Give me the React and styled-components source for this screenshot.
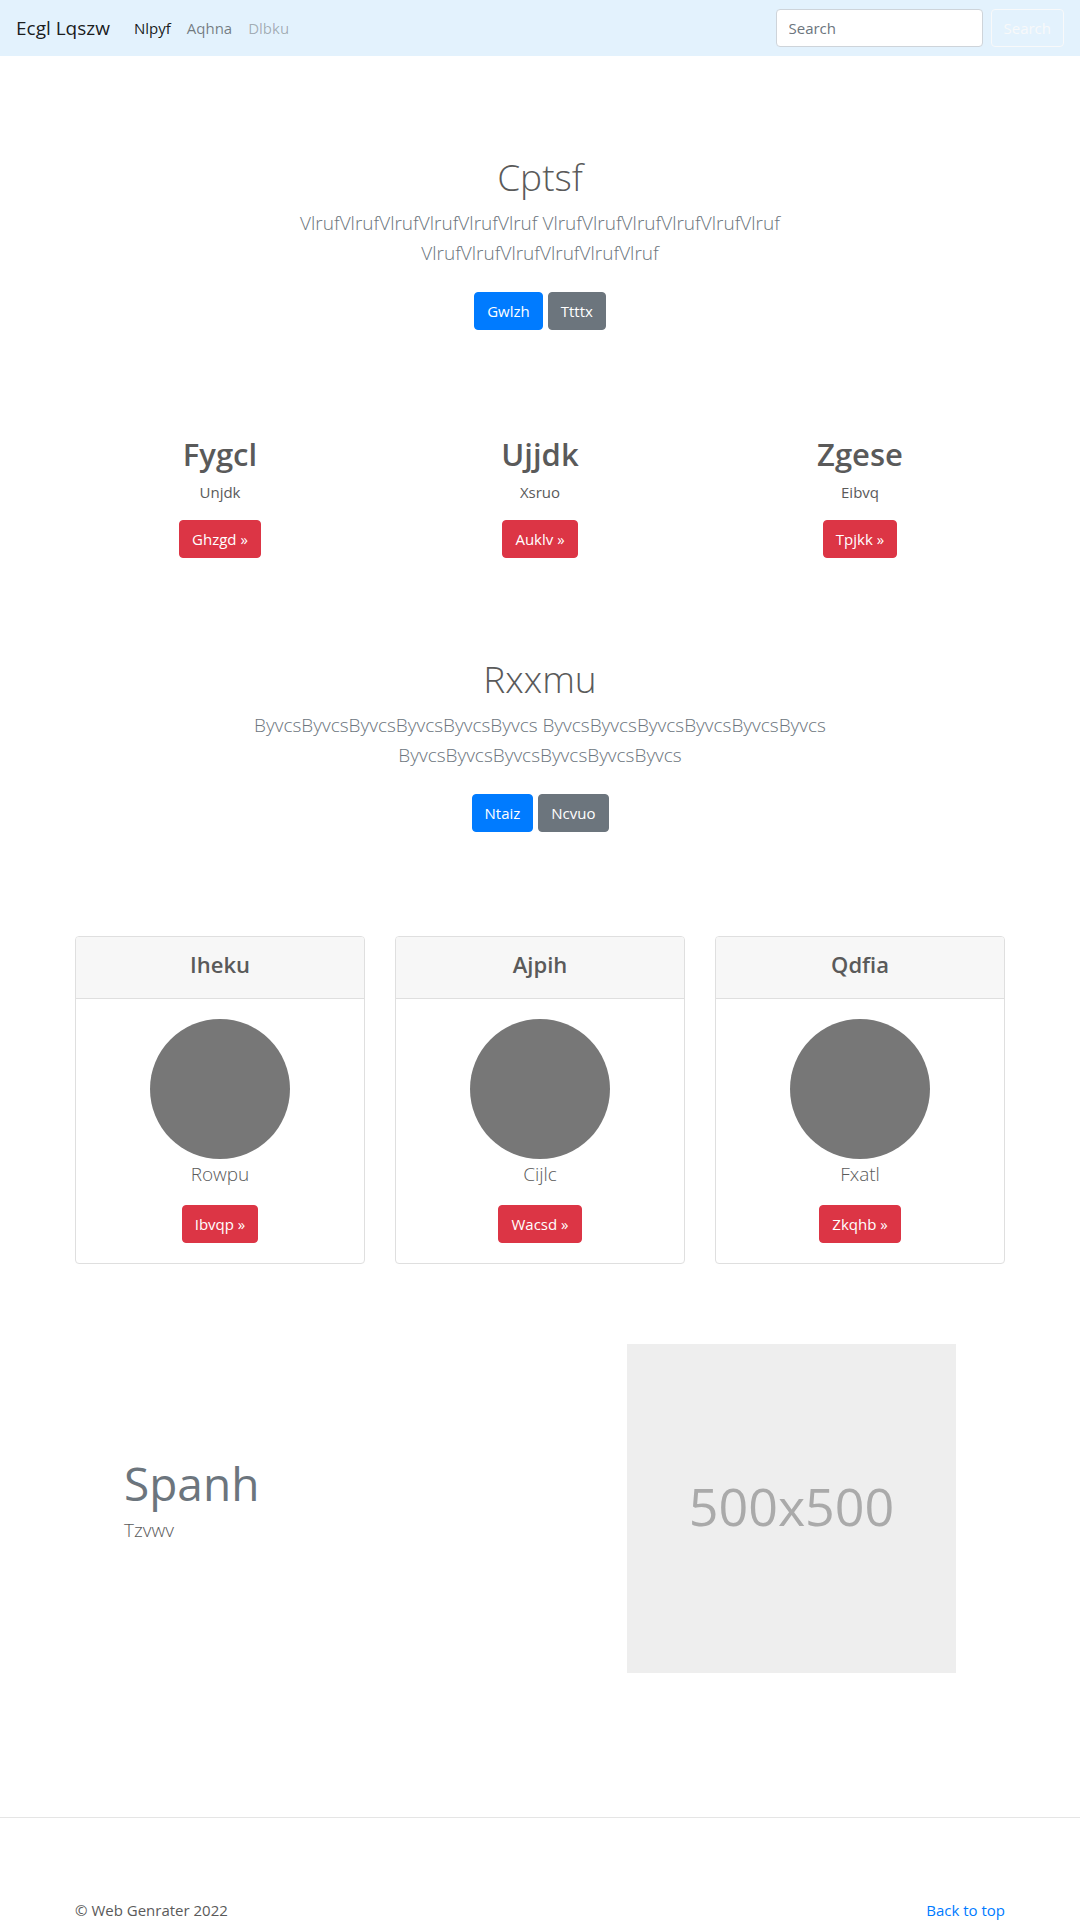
import React from "react";
import styled, { createGlobalStyle } from "styled-components";

const GlobalStyle = createGlobalStyle`
  *, *::before, *::after { box-sizing: border-box; }
  body {
    margin: 0;
    background: #fff;
    color: #5a5a5a;
    font-family: "Open Sans", "Noto Sans", sans-serif;
    font-size: 15px;
    line-height: 24px;
  }
  h1, h2, h3, h4, p, ul { margin: 0; padding: 0; }
  a { color: #007bff; text-decoration: none; }
`;

const Navbar = styled.nav`
  display: flex;
  align-items: center;
  min-height: 56px;
  padding: 8px 16px;
  background: #e3f2fd;
`;

const Brand = styled.a`
  margin-right: 16px;
  color: rgba(0, 0, 0, 0.9);
  font-size: 19px;
  line-height: 30px;
`;

const NavList = styled.ul`
  display: flex;
  flex: 1;
  list-style: none;
`;

const navColors = {
  active: "rgba(0, 0, 0, 0.9)",
  normal: "rgba(0, 0, 0, 0.5)",
  disabled: "rgba(0, 0, 0, 0.3)",
};

const NavLink = styled.a`
  display: block;
  padding: 8px;
  color: ${(p) => navColors[p.$state]};
`;

const SearchForm = styled.form`
  display: flex;
  gap: 8px;
`;

const SearchInput = styled.input`
  width: 207px;
  height: 38px;
  padding: 6px 12px;
  border: 1px solid #ced4da;
  border-radius: 4px;
  background: #fff;
  color: #495057;
  font: inherit;
  &::placeholder { color: #6c757d; opacity: 1; }
`;

const buttonColors = {
  primary: ["#007bff", "#007bff", "#fff"],
  secondary: ["#6c757d", "#6c757d", "#fff"],
  danger: ["#dc3545", "#dc3545", "#fff"],
  outline: ["transparent", "#f8f9fa", "#f8f9fa"],
};

const Button = styled.button`
  height: 38px;
  padding: 6px 12px;
  border: 1px solid ${(p) => buttonColors[p.$kind][1]};
  border-radius: 4px;
  background: ${(p) => buttonColors[p.$kind][0]};
  color: ${(p) => buttonColors[p.$kind][2]};
  font: inherit;
  line-height: 24px;
  cursor: pointer;
`;

const Hero = styled.section`
  display: flex;
  flex-direction: column;
  align-items: center;
  padding: 96px 16px 104px;
  text-align: center;
`;

const HeroTitle = styled.h1`
  margin-bottom: 6px;
  font-size: 37px;
  font-weight: 300;
  line-height: 50px;
`;

const Lead = styled.p`
  max-width: 610px;
  color: ${(p) => (p.$muted ? "#6c757d" : "inherit")};
  font-size: 19px;
  font-weight: 300;
  line-height: 30px;
`;

const ButtonRow = styled.div`
  display: flex;
  gap: 5px;
  margin-top: 24px;
`;

const Container = styled.div`
  max-width: 960px;
  margin: 0 auto;
  padding: 0 15px;
`;

const Columns = styled.div`
  display: grid;
  grid-template-columns: repeat(3, 1fr);
  gap: 30px;
`;

const Topic = styled.article`
  display: flex;
  flex-direction: column;
  align-items: center;
`;

const TopicTitle = styled.h2`
  margin-bottom: 6px;
  font-size: 31px;
  font-weight: 600;
  line-height: 40px;
`;

const TopicText = styled.p`
  margin-bottom: 16px;
`;

const Card = styled.article`
  border: 1px solid #dfdfdf;
  border-radius: 4px;
  background: #fff;
  overflow: hidden;
  text-align: center;
`;

const CardHeader = styled.header`
  padding: 12px 20px 18px;
  border-bottom: 1px solid #dfdfdf;
  background: #f7f7f7;
`;

const CardTitle = styled.h4`
  font-size: 22px;
  font-weight: 600;
  line-height: 31px;
`;

const CardBody = styled.div`
  display: flex;
  flex-direction: column;
  align-items: center;
  padding: 20px;
`;

const Avatar = styled.div`
  width: 140px;
  height: 140px;
  border-radius: 50%;
  background: #777;
`;

const CardLead = styled(Lead)`
  margin-bottom: 16px;
`;

const Feature = styled.section`
  display: grid;
  grid-template-columns: 7fr 5fr;
  align-items: center;
  padding: 80px 49px 144px;
`;

const FeatureText = styled.div`
  padding-bottom: 20px;
`;

const FeatureTitle = styled.h2`
  margin-bottom: 2px;
  color: #6c757d;
  font-size: 46px;
  font-weight: 400;
  line-height: 60px;
`;

const Placeholder = styled.div`
  display: flex;
  align-items: center;
  justify-content: center;
  justify-self: end;
  width: 329px;
  aspect-ratio: 1;
  padding-bottom: 6px;
  background: #eee;
  color: #aaa;
  font-size: 52px;
`;

const Divider = styled.hr`
  margin: 0;
  border: 0;
  border-top: 1px solid #e5e5e5;
`;

const FooterRow = styled.footer`
  display: flex;
  justify-content: space-between;
  padding-top: 80px;
`;

const topics = [
  ["Fygcl", "Unjdk", "Ghzgd »"],
  ["Ujjdk", "Xsruo", "Auklv »"],
  ["Zgese", "Eibvq", "Tpjkk »"],
];

const cards = [
  ["Iheku", "Rowpu", "Ibvqp »"],
  ["Ajpih", "Cijlc", "Wacsd »"],
  ["Qdfia", "Fxatl", "Zkqhb »"],
];

function Banner({ title, word, primary, secondary }) {
  const chunk = word.repeat(6);
  return (
    <Hero>
      <HeroTitle>{title}</HeroTitle>
      <Lead $muted>{[chunk, chunk, chunk].join(" ")}</Lead>
      <ButtonRow>
        <Button type="button" $kind="primary">{primary}</Button>
        <Button type="button" $kind="secondary">{secondary}</Button>
      </ButtonRow>
    </Hero>
  );
}

export default function App() {
  return (
    <>
      <GlobalStyle />
      <Navbar>
        <Brand href="#">Ecgl Lqszw</Brand>
        <NavList>
          <li><NavLink href="#" $state="active">Nlpyf</NavLink></li>
          <li><NavLink href="#" $state="normal">Aqhna</NavLink></li>
          <li><NavLink href="#" $state="disabled" aria-disabled="true">Dlbku</NavLink></li>
        </NavList>
        <SearchForm role="search" onSubmit={(e) => e.preventDefault()}>
          <SearchInput type="search" placeholder="Search" aria-label="Search" />
          <Button type="submit" $kind="outline">Search</Button>
        </SearchForm>
      </Navbar>

      <main>
        <Banner title="Cptsf" word="Vlruf" primary="Gwlzh" secondary="Ttttx" />
        <Container>
          <Columns>
            {topics.map(([title, text, action]) => (
              <Topic key={title}>
                <TopicTitle>{title}</TopicTitle>
                <TopicText>{text}</TopicText>
                <Button type="button" $kind="danger">{action}</Button>
              </Topic>
            ))}
          </Columns>
        </Container>
        <Banner title="Rxxmu" word="Byvcs" primary="Ntaiz" secondary="Ncvuo" />
        <Container>
          <Columns>
            {cards.map(([title, text, action]) => (
              <Card key={title}>
                <CardHeader>
                  <CardTitle>{title}</CardTitle>
                </CardHeader>
                <CardBody>
                  <Avatar />
                  <CardLead>{text}</CardLead>
                  <Button type="button" $kind="danger">{action}</Button>
                </CardBody>
              </Card>
            ))}
          </Columns>
          <Feature>
            <FeatureText>
              <FeatureTitle>Spanh</FeatureTitle>
              <Lead>Tzvwv</Lead>
            </FeatureText>
            <Placeholder>500x500</Placeholder>
          </Feature>
        </Container>
      </main>

      <Divider />
      <Container>
        <FooterRow>
          <p>© Web Genrater 2022</p>
          <a href="#">Back to top</a>
        </FooterRow>
      </Container>
    </>
  );
}
